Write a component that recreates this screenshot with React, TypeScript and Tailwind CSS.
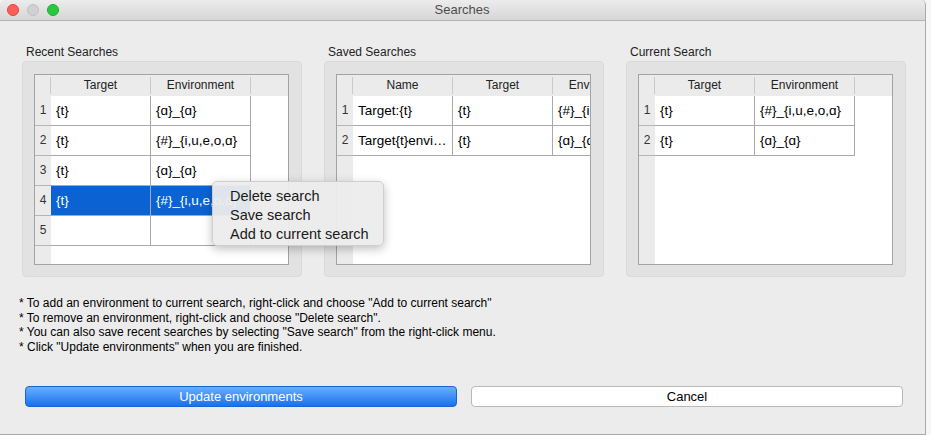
import React from 'react'

type Table = {
  columns: string[]
  rows: string[][]
  selected?: number
}

const recent: Table = {
  columns: ['Target', 'Environment'],
  rows: [
    ['{t}', '{ɑ}_{ɑ}'],
    ['{t}', '{#}_{i,u,e,o,ɑ}'],
    ['{t}', '{ɑ}_{ɑ}'],
    ['{t}', '{#}_{i,u,e,o,ɑ}'],
    ['', ''],
  ],
  selected: 3,
}

const saved: Table = {
  columns: ['Name', 'Target', 'Environment'],
  rows: [
    ['Target:{t}', '{t}', '{#}_{i,u,e,o,ɑ}'],
    ['Target{t}envi…', '{t}', '{ɑ}_{ɑ}'],
  ],
}

const current: Table = {
  columns: ['Target', 'Environment'],
  rows: [
    ['{t}', '{#}_{i,u,e,o,ɑ}'],
    ['{t}', '{ɑ}_{ɑ}'],
  ],
}

const font = { fontFamily: '"Liberation Sans", Arial, sans-serif' }

function DataTable({ table }: { table: Table }) {
  return (
    <div className="w-[255px] h-[191px] border border-[#a3a3a3] bg-white flex flex-col overflow-hidden">
      <div className="flex h-[21px] shrink-0 bg-[#ebebeb] items-center">
        <div className="w-[16px] h-[17px] shrink-0 border-r border-[#c9c9c9]" />
        {table.columns.map((c) => (
          <div
            key={c}
            className="w-[100px] h-[17px] shrink-0 border-r border-[#c9c9c9] text-center text-[12px] leading-[17px] text-[#222] whitespace-nowrap"
          >
            {c}
          </div>
        ))}
      </div>
      {table.rows.map((row, i) => (
        <div key={i} className="flex h-[30px] shrink-0">
          <div className="w-[16px] shrink-0 bg-[#ebebeb] border-b border-[#b5b5b5] text-center text-[12px] leading-[29px] text-[#333]">
            {i + 1}
          </div>
          {row.map((cell, j) => (
            <div
              key={j}
              className={`w-[100px] shrink-0 border-r border-b border-[#a9a9a9] pl-[5px] text-[13.5px] leading-[29px] whitespace-nowrap overflow-hidden ${
                table.selected === i ? 'bg-[#0b63d3] text-white' : 'text-black'
              }`}
            >
              {cell}
            </div>
          ))}
        </div>
      ))}
      <div className="flex flex-1">
        <div className="w-[16px] bg-[#ebebeb]" />
        <div className="flex-1 bg-white" />
      </div>
    </div>
  )
}

function Group({ title, table }: { title: string; table: Table }) {
  return (
    <div className="w-[280px] flex flex-col">
      <div className="pl-[4px] text-[12px] leading-[15px] text-[#222] mb-[1px]">{title}</div>
      <div className="h-[216px] rounded-[4px] bg-[#e2e2e2] border border-[#dadada] pl-[11px] pt-[12px]">
        <DataTable table={table} />
      </div>
    </div>
  )
}

export default function App() {
  return (
    <div className="w-[931px] h-[435px] flex bg-[#f4f4f4] overflow-hidden" style={font}>
      <div className="relative w-[926px] h-[435px] shrink-0 bg-[#ececec] border-r border-b border-[#a9a9a9] rounded-t-[5px] flex flex-col">
        <div className="h-[21px] shrink-0 flex items-center relative border-b border-[#b3b3b3] rounded-t-[5px] bg-gradient-to-b from-[#ececec] to-[#d6d6d6]">
          <div className="flex gap-[8px] pl-[7px]">
            <span className="w-[12px] h-[12px] rounded-full bg-[#fc5f57] border border-[#e0443e]" />
            <span className="w-[12px] h-[12px] rounded-full bg-[#d1d1d1] border border-[#c0c0c0]" />
            <span className="w-[12px] h-[12px] rounded-full bg-[#2ac840] border border-[#1dad2b]" />
          </div>
          <div className="flex-1 text-center text-[13px] text-[#4d4d4d] pr-[60px]">Searches</div>
        </div>

        <div className="flex gap-[22px] pl-[22px] mt-[24px]">
          <Group title="Recent Searches" table={recent} />
          <Group title="Saved Searches" table={saved} />
          <Group title="Current Search" table={current} />
        </div>

        <div className="pl-[19px] mt-[19px] text-[12px] leading-[14.7px] text-black">
          <p>* To add an environment to current search, right-click and choose "Add to current search"</p>
          <p>* To remove an environment, right-click and choose "Delete search".</p>
          <p>* You can also save recent searches by selecting "Save search" from the right-click menu.</p>
          <p>* Click "Update environments" when you are finished.</p>
        </div>

        <div className="flex gap-[14px] pl-[25px] mt-[31px]">
          <button className="w-[432px] h-[21px] rounded-[4px] border border-[#1b62d8] bg-gradient-to-b from-[#67aefc] to-[#1670ef] text-white text-[13px] leading-[19px]">
            Update environments
          </button>
          <button className="w-[432px] h-[21px] rounded-[4px] border border-[#b9b9b9] bg-white text-black text-[13px] leading-[19px]">
            Cancel
          </button>
        </div>

        <div className="absolute left-[212px] top-[181px] w-[172px] h-[65px] rounded-[5px] bg-[#ececec]/95 border border-[#cfcfcf] shadow-[0_3px_10px_rgba(0,0,0,0.25)] pl-[17px] pt-[5px] text-[14.5px] leading-[19px] text-[#1a1a1a]">
          <div>Delete search</div>
          <div>Save search</div>
          <div>Add to current search</div>
        </div>
      </div>
      <div className="flex-1 bg-[#f6f6f6]" />
    </div>
  )
}
